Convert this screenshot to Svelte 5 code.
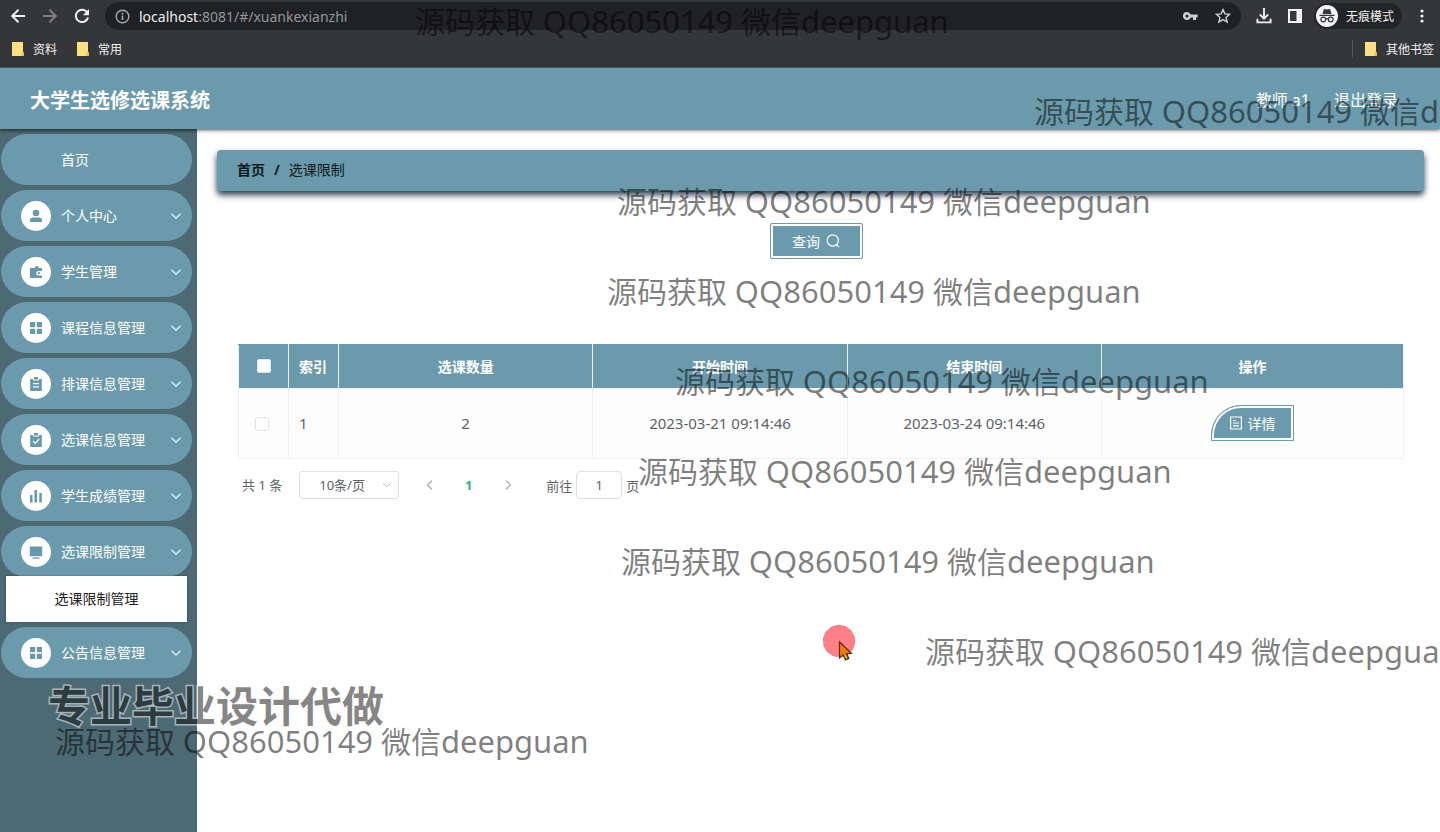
<script>
  const menu = [
    { label: '首页', icon: null },
    { label: '个人中心', icon: 'user' },
    { label: '学生管理', icon: 'wallet' },
    { label: '课程信息管理', icon: 'grid' },
    { label: '排课信息管理', icon: 'order' },
    { label: '选课信息管理', icon: 'claim' },
    { label: '学生成绩管理', icon: 'data' },
    { label: '选课限制管理', icon: 'monitor', children: ['选课限制管理'] },
    { label: '公告信息管理', icon: 'grid' }
  ];

  const rows = [
    { index: 1, count: 2, start: '2023-03-21 09:14:46', end: '2023-03-24 09:14:46' }
  ];

  const marks = [
    { x: 415, y: 1 },
    { x: 1034, y: 91 },
    { x: 617, y: 181 },
    { x: 607, y: 271 },
    { x: 675, y: 361 },
    { x: 638, y: 451 },
    { x: 621, y: 541 },
    { x: 925, y: 631 },
    { x: 55, y: 721 }
  ];
</script>

<div class="screen">
  <div class="browser">
    <div class="toolbar">
      <button class="tool" aria-label="后退">
        <svg width="16" height="16" viewBox="0 0 16 16" fill="none" stroke="#f1f1f1" stroke-width="2"><path d="M15 8H2.5M8.5 1.7 2.2 8l6.3 6.3" /></svg>
      </button>
      <button class="tool" aria-label="前进">
        <svg width="16" height="16" viewBox="0 0 16 16" fill="none" stroke="#808084" stroke-width="2"><path d="M1 8h12.5M7.5 1.7 13.8 8l-6.3 6.3" /></svg>
      </button>
      <button class="tool" aria-label="刷新">
        <svg width="16" height="16" viewBox="0 0 16 16" fill="none"><path d="M13.3 4.6A6.2 6.2 0 1 0 14 9.6" stroke="#f1f1f1" stroke-width="2" /><path d="M15 1v6.2H8.8z" fill="#f1f1f1" /></svg>
      </button>
      <div class="address">
        <svg width="15" height="15" viewBox="0 0 15 15" fill="none" stroke="#a9abae" stroke-width="1.4"><circle cx="7.5" cy="7.5" r="6.3" /><path d="M7.5 6.6v4.4M7.5 3.8v1.6" stroke-width="1.6" /></svg>
        <span class="url"><b>localhost</b>:8081/#/xuankexianzhi</span>
        <svg width="15" height="10" viewBox="0 0 15 10" fill="#cfd0d2"><path fill-rule="evenodd" d="M4 1a4 4 0 1 0 3.7 5.4H10V9h3V6.400h1.600V3.600H7.700A4 4 0 0 0 4 1zm0 2.500a1.500 1.500 0 1 1 0 3 1.500 1.500 0 0 1 0-3z" /></svg>
        <svg class="star" width="16" height="16" viewBox="0 0 16 16" fill="none" stroke="#d0d1d3" stroke-width="1.4"><path d="m8 1.600 1.900 4.300 4.700.4-3.600 3.100 1.100 4.600L8 11.600 3.900 14 5 9.400 1.400 6.300l4.700-.4z" /></svg>
      </div>
      <button class="tool" aria-label="下载">
        <svg width="16" height="16" viewBox="0 0 17 17" fill="none" stroke="#f1f1f1" stroke-width="2"><path d="M8.500 0v11M4 6.800l4.500 4.500L13 6.800M1.500 11.500v3.800h14v-3.800" /></svg>
      </button>
      <button class="tool" aria-label="侧边栏">
        <svg width="14" height="14" viewBox="0 0 14 14"><path fill="#f1f1f1" fill-rule="evenodd" d="M0 0h14v14H0zM2 2v10h6.500V2z" /></svg>
      </button>
      <span class="incognito">
        <svg width="22" height="22" viewBox="0 0 22 22"><circle cx="11" cy="11" r="11" fill="#f3f3f3" /><path d="M7.500 5.200 8.200 4l2.800.6 2.800-.6.7 1.200 1 3.800h-9zM3.500 9.700h15v1.200h-15z" fill="#343539" /><g fill="none" stroke="#343539" stroke-width="1.200"><circle cx="7.300" cy="14.500" r="2.400" /><circle cx="14.700" cy="14.500" r="2.400" /><path d="M9.700 14.100q1.300-.8 2.600 0" /></g></svg>
        无痕模式
      </span>
      <button class="tool more" aria-label="更多">
        <svg width="4" height="14" viewBox="0 0 4 14" fill="#f1f1f1"><circle cx="2" cy="2" r="1.600" /><circle cx="2" cy="7" r="1.600" /><circle cx="2" cy="12" r="1.600" /></svg>
      </button>
    </div>
    <div class="bookmarks">
      {#each ['资料', '常用'] as name}
        <span class="bookmark">{@render folder()}{name}</span>
      {/each}
      <span class="bookmark other">{@render folder()}其他书签</span>
    </div>
  </div>

  <header>
    <h1>大学生选修选课系统</h1>
    <div class="account">
      <span>教师 a1</span>
      <a href="#/login">退出登录</a>
    </div>
  </header>

  <div class="body">
    <nav>
      {#each menu as item}
        <button class="item">
          {#if item.icon}
            <span class="badge">{@render glyph(item.icon)}</span>
          {/if}
          <span class="label">{item.label}</span>
          {#if item.icon}
            <svg class="arrow" width="12" height="12" viewBox="0 0 12 12" fill="none" stroke="#e2f3f9" stroke-width="1.200"><path d="m1.500 3.800 4.500 4.400 4.500-4.400" /></svg>
          {/if}
        </button>
        {#each item.children ?? [] as child}
          <a class="sub" href="#/xuankexianzhi">{child}</a>
        {/each}
      {/each}
    </nav>

    <main>
      <div class="crumbs">
        <a href="#/">首页</a><b>/</b><span>选课限制</span>
      </div>
      <div class="content">
        <div class="search">
          <button class="framed query">
            查询
            <svg width="14" height="14" viewBox="0 0 14 14" fill="none" stroke="#fff" stroke-width="1.200"><circle cx="6.800" cy="6.500" r="5.600" /><path d="m10.600 10.700 2.200 2.400" /></svg>
          </button>
        </div>

        <table>
          <colgroup>
            <col class="narrow" /><col class="narrow" /><col /><col /><col /><col class="actions" />
          </colgroup>
          <thead>
            <tr>
              <th><input type="checkbox" aria-label="全选" /></th>
              <th class="left">索引</th>
              <th>选课数量</th>
              <th>开始时间</th>
              <th>结束时间</th>
              <th>操作</th>
            </tr>
          </thead>
          <tbody>
            {#each rows as row}
              <tr>
                <td class="pick"><input type="checkbox" aria-label="选择" /></td>
                <td class="left">{row.index}</td>
                <td>{row.count}</td>
                <td>{row.start}</td>
                <td>{row.end}</td>
                <td>
                  <button class="framed detail">
                    <svg width="12" height="14" viewBox="0 0 12 14" fill="none" stroke="#fff" stroke-width="1.200"><path d="M.6 1h10.800v12H.6zM3 4.500h3M3 7h6M3 9.800h6" /></svg>
                    详情
                  </button>
                </td>
              </tr>
            {/each}
          </tbody>
        </table>

        <div class="pager">
          <span class="total">共 1 条</span>
          <span class="size">
            <select aria-label="每页条数"><option>10条/页</option></select>
            <svg width="12" height="12" viewBox="0 0 12 12" fill="none" stroke="#c0c4cc"><path d="m2 4 4 4 4-4" /></svg>
          </span>
          <button class="step" aria-label="上一页"><svg width="12" height="12" viewBox="0 0 12 12" fill="none" stroke="#a8abb2" stroke-width="1.200"><path d="M8 1.500 3.500 6 8 10.500" /></svg></button>
          <button class="step current">1</button>
          <button class="step" aria-label="下一页"><svg width="12" height="12" viewBox="0 0 12 12" fill="none" stroke="#a8abb2" stroke-width="1.200"><path d="M4 1.500 8.500 6 4 10.500" /></svg></button>
          <label class="jump">前往 <input type="text" value="1" /> 页</label>
        </div>
      </div>
    </main>
  </div>

  <div class="overlay">
    {#each marks as mark}
      <span class="mark" style="left: {mark.x}px; top: {mark.y}px">源码获取 <span class="latin">QQ86050149</span> 微信<span class="latin">deepguan</span></span>
    {/each}
    <strong class="slogan">专业毕业设计代做</strong>
    <svg class="pointer" width="34" height="38" viewBox="0 0 34 38">
      <circle cx="17" cy="17" r="16" fill="#ff8086" /><circle cx="17" cy="17" r="15.500" fill="none" stroke="#d87880" stroke-width="1" stroke-dasharray="3 4" />
      <path d="M17.500 18v16l3.600-3 2.400 5 3.400-1.600-2.300-4.600 4.900-.6z" fill="#ef7d0c" stroke="#612719" stroke-width="1.200" />
      <path d="m22 32 2 3.500 2-1-1.500-3.500" fill="#e9d83b" stroke="#54401c" />
    </svg>
  </div>
</div>

{#snippet folder()}
  <svg width="14" height="16" viewBox="0 0 14 16"><path d="M2 1h11v10l1 1v3H2z" fill="#fbe182" /><path d="m12 12 1-1.500 1 1.500v3h-2.500z" fill="#e2bd50" /></svg>
{/snippet}

{#snippet glyph(name)}
  <svg width="14" height="14" viewBox="0 0 14 14" fill="#6898aa">
    {#if name === 'user'}
      <circle cx="7" cy="4" r="3.300" /><path d="M1 13v-1.500Q1 8.600 4 8.600h6q3 0 3 2.900V13z" />
    {:else if name === 'wallet'}
      <path d="m4 3.500 4.500-3L10.500 3.500z" /><path fill-rule="evenodd" d="M1 3h12v3H9.500a2.200 2.200 0 0 0 0 4.400H13V13H1z" /><circle cx="10" cy="8.200" r="1.100" />
    {:else if name === 'grid'}
      <path d="M1 1h5.200v5.200H1zM7.800 1H13v5.200H7.800zM1 7.800h5.200V13H1zM7.800 7.800H13V13H7.800z" />
    {:else if name === 'order'}
      <path fill-rule="evenodd" d="M1.200 2H4v1.500h6V2h2.800v12H1.200zM4 6v1.200h6V6zm0 3.200v1.200h6V9.200z" /><path d="M5 0h4v2.500H5z" />
    {:else if name === 'claim'}
      <path d="M1.200 2H4v1.500h6V2h2.800v12H1.200zM5 0h4v2.500H5z" /><path d="m4 8 2.200 2.300L10.300 6" fill="none" stroke="#fff" stroke-width="1.200" />
    {:else if name === 'data'}
      <path d="M1 6h2.500v7.500H1zM5.500 1H8v12.500H5.500zM10.300 4h2.500v9.500h-2.500z" />
    {:else}
      <path d="M.8 1.500h12.400v9.800H.8zM3.500 12.500h7v1.200h-7z" />
    {/if}
  </svg>
{/snippet}

<style>
  :global(body) {
    margin: 0;
    background: #fff;
  }

  .screen {
    position: relative;
    display: flex;
    flex-direction: column;
    min-height: 100vh;
    overflow: hidden;
    font-family: 'Noto Sans', 'Noto Sans CJK SC', sans-serif;
    font-size: 14px;
    color: #606266;
  }

  .screen * {
    box-sizing: border-box;
  }

  button,
  input,
  select {
    font: inherit;
    color: inherit;
    margin: 0;
  }

  button {
    border: 0;
    padding: 0;
    background: none;
    cursor: pointer;
  }

  a {
    color: inherit;
    text-decoration: none;
  }

  svg {
    display: block;
    flex: none;
  }

  .browser {
    background: #35363a;
    color: #f1f1f1;
    font-size: 12px;
    border-bottom: 1px solid #52626a;
  }

  .toolbar {
    display: flex;
    align-items: center;
    gap: 16px;
    height: 32px;
    padding: 0 10px;
  }

  .address {
    display: flex;
    flex: 1;
    align-items: center;
    gap: 9px;
    height: 28px;
    margin-left: -1px;
    margin-right: -1px;
    padding: 0 10px;
    border-radius: 14px;
    background: #202124;
    color: #94979b;
    font-size: 14px;
  }

  .address b {
    color: #eceded;
    font-weight: 400;
  }

  .url {
    flex: 1;
  }

  .star {
    margin-left: 8px;
  }

  .incognito {
    display: flex;
    align-items: center;
    gap: 8px;
    height: 26px;
    margin-left: -4px;
    padding: 0 8px 0 2px;
    border-radius: 13px;
    background: #232427;
  }

  .more {
    padding: 0 6px 0 2px;
  }

  .bookmarks {
    display: flex;
    align-items: center;
    gap: 18px;
    height: 35px;
    padding: 0 6px 2px 10px;
  }

  .bookmark {
    display: flex;
    align-items: center;
    gap: 9px;
  }

  .other {
    margin-left: auto;
    padding-left: 10px;
    border-left: 1px solid #55565a;
  }

  header {
    position: relative;
    display: flex;
    align-items: center;
    justify-content: space-between;
    height: 61px;
    padding: 0 42px 0 30px;
    background: #6b9aac;
    box-shadow: 0 1px 4px rgba(0, 0, 0, 0.7);
    color: #fff;
    z-index: 1;
  }

  h1 {
    margin: 0;
    padding-top: 4px;
    font-size: 20px;
    line-height: 28px;
  }

  .account {
    display: flex;
    gap: 24px;
    font-size: 16px;
  }

  .body {
    display: flex;
    flex: 1;
  }

  nav {
    display: flex;
    flex: none;
    flex-direction: column;
    gap: 5px;
    width: 197px;
    padding: 5px 5px 6px 1px;
    background: #4c6974;
  }

  .item {
    display: flex;
    align-items: center;
    height: 51px;
    padding: 0 10px 0 20px;
    border-radius: 26px;
    background: #6b9aac;
    color: #fff;
  }

  .badge {
    display: grid;
    place-items: center;
    width: 30px;
    height: 30px;
    margin-right: 10px;
    border-radius: 50%;
    background: #fff;
  }

  .label {
    padding-bottom: 2px;
  }

  .label:first-child {
    margin-left: 40px;
  }

  .arrow {
    margin-left: auto;
  }

  .sub {
    display: grid;
    place-items: center;
    height: 46px;
    margin: -6px 5px 0;
    padding-bottom: 2px;
    background: #fff;
    color: #222;
    box-shadow: 0 0 2px rgba(0, 0, 0, 0.4);
  }

  main {
    flex: 1;
    min-width: 0;
    padding: 21px 16px 20px 20px;
  }

  .crumbs {
    display: flex;
    align-items: center;
    gap: 9px;
    height: 41px;
    padding: 0 20px 3px;
    border-radius: 4px;
    background: #6b9aac;
    box-shadow: 0 4px 6px rgba(20, 40, 60, 0.9);
    color: #0c1a20;
  }

  .crumbs a {
    font-weight: 700;
  }

  .content {
    padding: 32px 20px 0 21px;
  }

  .search {
    display: flex;
    justify-content: center;
    padding-right: 10px;
    margin-bottom: 85px;
  }

  .framed {
    display: inline-flex;
    align-items: center;
    justify-content: center;
    gap: 6px;
    height: 36px;
    border: 1px solid #6b9aac;
    background: #6b9aac;
    box-shadow: inset 0 0 0 2px #fff;
    color: #fff;
    vertical-align: middle;
  }

  .query {
    width: 93px;
    border-radius: 2px;
  }

  table {
    width: 100%;
    table-layout: fixed;
    border-collapse: collapse;
    text-align: center;
  }

  .narrow {
    width: 50px;
  }

  .actions {
    width: 302px;
  }

  th {
    height: 44px;
    padding: 0 10px 2px;
    border: 1px solid #ebf1f4;
    border-top-color: #6b9aac;
    background: #6b9aac;
    color: #fff;
    white-space: nowrap;
  }

  td {
    height: 70px;
    padding: 0 10px 2px;
    border: 1px solid #f0f1f3;
    background: #fdfdfd;
    font-size: 15px;
  }

  .detail {
    width: 83px;
    border-radius: 30px 0 0 0;
    font-size: 14px;
  }

  .left {
    text-align: left;
  }

  table input {
    display: block;
    width: 14px;
    height: 14px;
    margin: 0 auto;
    border: 1px solid #e4e6ea;
    border-radius: 2px;
    background: #fff;
    appearance: none;
  }

  .pick {
    padding: 0 13px 0 10px;
  }

  .pager {
    display: flex;
    align-items: center;
    margin-top: 12px;
    padding-left: 4px;
    font-size: 13px;
  }

  .total {
    padding-bottom: 1px;
  }

  .size {
    position: relative;
    margin: 0 16px 0 17px;
  }

  .size select {
    width: 100px;
    height: 28px;
    padding: 0 0 1px 19px;
    border: 1px solid #dcdfe6;
    border-radius: 3px;
    background: #fff;
    appearance: none;
  }

  .size svg {
    position: absolute;
    top: 8px;
    right: 6px;
    pointer-events: none;
  }

  .step {
    display: grid;
    place-items: center;
    width: 29px;
    height: 28px;
    margin-right: 10px;
  }

  .current {
    color: #29b782;
    font-weight: 700;
  }

  .jump {
    display: flex;
    align-items: center;
    gap: 4px;
    margin-left: 14px;
  }

  .jump input {
    width: 46px;
    height: 28px;
    border: 1px solid #dcdfe6;
    border-radius: 4px;
    text-align: center;
  }

  .overlay {
    position: absolute;
    inset: 0;
    z-index: 2;
    overflow: hidden;
    pointer-events: none;
  }

  .mark {
    position: absolute;
    color: rgba(0, 0, 0, 0.5);
    font-size: 30px;
    line-height: 40px;
    white-space: nowrap;
  }

  .latin {
    font-size: 31px;
  }

  .slogan {
    position: absolute;
    left: 48px;
    top: 679px;
    color: #101010;
    font-size: 42px;
    font-weight: 700;
    line-height: 54px;
    white-space: nowrap;
    opacity: 0.5;
    -webkit-text-stroke: 3px #fff;
    paint-order: stroke fill;
  }

  .pointer {
    position: absolute;
    left: 822px;
    top: 624px;
  }
</style>
